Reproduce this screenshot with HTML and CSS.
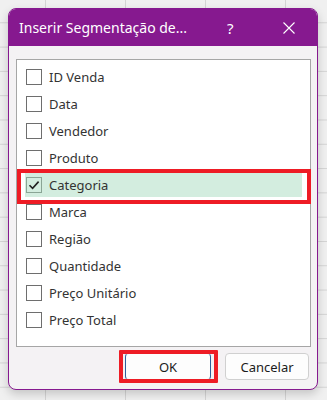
FILE: index.html
```html
<!DOCTYPE html>
<html lang="pt">
<head>
  <meta charset="UTF-8" />
  <title>Inserir Segmentação de Dados</title>
  <link rel="stylesheet" href="styles.css">
</head>
<body>
  <div class="dialog">
    <div class="titlebar">
      <span class="title">Inserir Segmentação de...</span>
      <span class="help">?</span>
      <span class="close">
        <svg width="12" height="12" viewBox="0 0 12 12">
          <path d="M0.5 0.5 L11.5 11.5 M11.5 0.5 L0.5 11.5" stroke="#fff" stroke-width="1.1" fill="none"/>
        </svg>
      </span>
    </div>

    <div class="content">
      <div class="listbox">
        <div class="item"><span class="check"></span><span>ID Venda</span></div>
        <div class="item"><span class="check"></span><span>Data</span></div>
        <div class="item"><span class="check"></span><span>Vendedor</span></div>
        <div class="item"><span class="check"></span><span>Produto</span></div>
        <div class="item selected marked">
          <span class="check checked">
            <svg width="14" height="14" viewBox="0 0 14 14">
              <path d="M2.5 7.2 L5.6 10.3 L11.6 3.6" stroke="#222" stroke-width="1.6" fill="none"/>
            </svg>
          </span>
          <span>Categoria</span>
        </div>
        <div class="item"><span class="check"></span><span>Marca</span></div>
        <div class="item"><span class="check"></span><span>Região</span></div>
        <div class="item"><span class="check"></span><span>Quantidade</span></div>
        <div class="item"><span class="check"></span><span>Preço Unitário</span></div>
        <div class="item"><span class="check"></span><span>Preço Total</span></div>
      </div>

      <div class="buttons">
        <button class="btn default marked">OK</button>
        <button class="btn">Cancelar</button>
      </div>
    </div>
  </div>
</body>
</html>
```

FILE: styles.css
```css
html, body {
  height: 100%;
}

body {
  margin: 0;
  font-family: "Noto Sans", "Open Sans", sans-serif;
  background-color: #f0f0f0;
  background-image:
    linear-gradient(to right, #d4d4d4 1px, transparent 1px),
    linear-gradient(to bottom, #d4d4d4 1px, transparent 1px);
  background-size: 80px 100%, 100% 24.3px;
  background-position: 45px 0, 0 -2px;
  padding: 8px;
  box-sizing: border-box;
}

.dialog {
  width: 310px;
  height: 382px;
  box-sizing: border-box;
  border: 1px solid #86198f;
  border-radius: 8px;
  background: #f4f2f4;
  box-shadow: 0 4px 10px rgba(0, 0, 0, 0.18);
  display: flex;
  flex-direction: column;
  overflow: hidden;
}

.titlebar {
  height: 37px;
  background: #86198f;
  color: #fff;
  display: flex;
  align-items: center;
  padding-left: 10px;
  flex-shrink: 0;
}

.title {
  font-size: 14px;
  flex: 1;
}

.help {
  font-size: 15px;
  width: 14px;
  margin-right: 42px;
}

.close {
  display: flex;
  width: 12px;
  margin-right: 22px;
  padding-top: 1px;
}

.content {
  flex: 1;
  display: flex;
  flex-direction: column;
}

.listbox {
  margin: 13px 6px 0 7px;
  height: 288px;
  box-sizing: border-box;
  background: #fff;
  border: 1px solid #a6a6a6;
  padding: 5px 8px 0 8px;
}

.item {
  position: relative;
  height: 24px;
  margin-bottom: 3px;
  display: flex;
  align-items: center;
  padding-left: 1px;
  font-size: 13px;
  color: #333;
}

.item.selected {
  background: #d3eddf;
}

.check {
  width: 16px;
  height: 16px;
  box-sizing: border-box;
  border: 1px solid #6e6e6e;
  background: #fff;
  margin-right: 7px;
  display: flex;
  align-items: center;
  justify-content: center;
}

.check.checked {
  background: #d3eddf;
  border-color: #8aa595;
}

.item.marked::after {
  content: "";
  position: absolute;
  left: -8px;
  right: -9px;
  top: -4px;
  bottom: -7px;
  border: 4px solid #ee1c25;
}

.buttons {
  display: flex;
  justify-content: flex-end;
  gap: 14px;
  margin-top: 6px;
  padding-right: 8px;
}

.btn {
  position: relative;
  width: 84px;
  height: 27px;
  background: #fdfdfd;
  border: 1px solid #d0d0d0;
  border-radius: 4px;
  font-family: "Noto Sans", "Open Sans", sans-serif;
  font-size: 13px;
  color: #1b1b1b;
  padding: 0;
}

.btn.default {
  width: 86px;
  border-left-color: #2f5f9a;
  border-right-color: #2f5f9a;
}

.btn.marked::after {
  content: "";
  position: absolute;
  left: -7px;
  right: -8px;
  top: -4px;
  bottom: -4px;
  border: 4px solid #ee1c25;
  border-radius: 1px;
}
```
